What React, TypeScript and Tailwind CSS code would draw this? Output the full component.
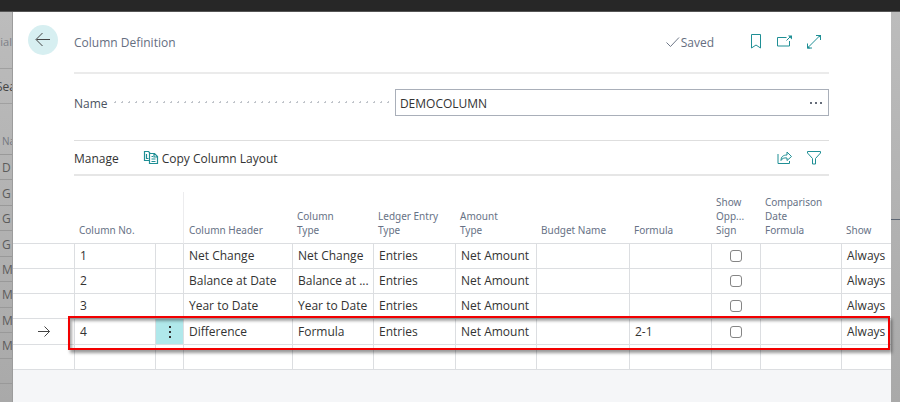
import type { ReactNode } from "react";

type Row = {
  no: string;
  header: string;
  type: string;
  entry: string;
  amount: string;
  formula: string;
  show: string;
  selected?: boolean;
};

const rows: Row[] = [
  { no: "1", header: "Net Change", type: "Net Change", entry: "Entries", amount: "Net Amount", formula: "", show: "Always" },
  { no: "2", header: "Balance at Date", type: "Balance at ...", entry: "Entries", amount: "Net Amount", formula: "", show: "Always" },
  { no: "3", header: "Year to Date", type: "Year to Date", entry: "Entries", amount: "Net Amount", formula: "", show: "Always" },
  { no: "4", header: "Difference", type: "Formula", entry: "Entries", amount: "Net Amount", formula: "2-1", show: "Always", selected: true },
];

const backgroundRows = ["D", "G", "G", "G", "M", "M", "M", "M", ""];

function Icon({ children, className = "text-[#1f8f95]" }: { children: ReactNode; className?: string }) {
  return (
    <svg width="16" height="16" viewBox="0 0 16 16" fill="none" stroke="currentColor" className={className} aria-hidden="true">
      {children}
    </svg>
  );
}

function IconButton({ label, children }: { label: string; children: ReactNode }) {
  return (
    <button type="button" aria-label={label} className="block">
      <Icon>{children}</Icon>
    </button>
  );
}

function Backdrop() {
  return (
    <div className="w-[13px] shrink-0 overflow-hidden border-r border-[#9c9c9c] bg-linear-to-b from-[#bcbcbc] to-[#a9a9a9] text-xs text-[#5c5c5c]">
      <div className="flex h-[57px] items-center justify-end border-b border-[#a0a0a0] pt-1 text-[11px] text-[#7c8088]">ial</div>
      <div className="flex h-[35px] items-center justify-center border-b border-[#a0a0a0] pt-[2px] text-[#444]">
        <span>Sea</span>
      </div>
      <div className="flex h-[51px] items-end border-b border-[#999] pb-[6px] pl-[2px] text-[10px] text-[#747880]">Na</div>
      <div className="flex h-[229px] flex-col">
        {backgroundRows.map((text, i) => (
          <div key={i} className="flex flex-1 items-center border-b border-[#999] pt-[2px] pl-[2px]">
            {text}
          </div>
        ))}
      </div>
    </div>
  );
}

function Th({ children, className = "" }: { children?: ReactNode; className?: string }) {
  return (
    <th scope="col" className={`border-b border-b-[#dcdee1] pb-[6px] pl-[5px] text-left align-bottom font-normal ${className}`}>
      {children}
    </th>
  );
}

function Td({ children, className = "pl-[5px]" }: { children?: ReactNode; className?: string }) {
  return <td className={`whitespace-nowrap border-b border-l border-[#dcdee1] ${className}`}>{children}</td>;
}

function ColumnTable() {
  return (
    <table className="w-full table-fixed border-separate border-spacing-0 text-xs leading-5 text-[#333]">
      <colgroup>
        <col className="w-[61px]" />
        <col className="w-[81px]" />
        <col className="w-[28px]" />
        <col className="w-[109px]" />
        <col className="w-[81px]" />
        <col className="w-[82px]" />
        <col className="w-[81px]" />
        <col className="w-[93px]" />
        <col className="w-[82px]" />
        <col className="w-[49px]" />
        <col className="w-[81px]" />
        <col />
      </colgroup>
      <thead className="font-['Noto_Sans',sans-serif] text-[10px] leading-[14px] text-[#677286]">
        <tr className="h-[52px]">
          <Th />
          <Th>Column No.</Th>
          <Th />
          <Th className="border-l border-l-[#ececee]">Column Header</Th>
          <Th>Column<br />Type</Th>
          <Th>Ledger Entry<br />Type</Th>
          <Th>Amount<br />Type</Th>
          <Th>Budget Name</Th>
          <Th>Formula</Th>
          <Th>Show<br />Opp...<br />Sign</Th>
          <Th>Comparison<br />Date<br />Formula</Th>
          <Th>Show</Th>
        </tr>
      </thead>
      <tbody>
        {rows.map((row) => (
          <tr key={row.no} className={row.selected ? "relative h-[26px]" : "h-[25px]"}>
            <td className="border-b border-[#dcdee1]">
              {row.selected && (
                <>
                  <Icon className="mx-auto text-[#444]">
                    <path d="M2 7.500h11.500M8.500 2.500l5 5-5 5" />
                  </Icon>
                  <span className="pointer-events-none absolute -top-[3px] right-px -bottom-[5px] left-[55px] border-2 border-[#f20000] shadow-[2px_3px_3px_rgba(0,0,0,0.4),inset_2px_3px_3px_rgba(0,0,0,0.35)]" />
                </>
              )}
            </td>
            <Td>{row.no}</Td>
            <Td className={row.selected ? "bg-[#b0e8eb]" : ""}>
              {row.selected && (
                <button type="button" aria-label="Row actions" className="flex w-full justify-center">
                  <svg width="4" height="14" viewBox="0 0 4 14" fill="#333" aria-hidden="true">
                    <rect x="1" y="1" width="2" height="2" />
                    <rect x="1" y="6" width="2" height="2" />
                    <rect x="1" y="11" width="2" height="2" />
                  </svg>
                </button>
              )}
            </Td>
            <Td>{row.header}</Td>
            <Td>{row.type}</Td>
            <Td>{row.entry}</Td>
            <Td>{row.amount}</Td>
            <Td />
            <Td>{row.formula}</Td>
            <Td className="">
              <input
                type="checkbox"
                aria-label={`Show opposite sign, column ${row.no}`}
                className="mx-auto block size-3 appearance-none rounded-[3px] border border-[#858585] bg-white"
              />
            </Td>
            <Td />
            <Td>{row.show}</Td>
          </tr>
        ))}
        <tr className="h-[25px]">
          <td className="border-b border-[#dcdee1]" />
          {Array.from({ length: 11 }, (_, i) => (
            <Td key={i} />
          ))}
        </tr>
      </tbody>
    </table>
  );
}

export default function App() {
  return (
    <div className="flex h-screen flex-col overflow-hidden bg-[#adadad] font-['Open_Sans','Noto_Sans',sans-serif]">
      <div className="h-3 shrink-0 border-b border-[#555] bg-[#272727]" />
      <div className="flex min-h-0 flex-1">
        <Backdrop />
        <main className="flex min-w-0 flex-1 flex-col bg-[#f5f6f8]">
          <div className="bg-white">
            <div className="flex pr-[62px] pl-[15px]">
              <button type="button" aria-label="Back" className="mt-[13px] mr-4 flex size-[30px] shrink-0 items-center justify-center rounded-full bg-[#d7eff1] text-[#444]">
                <svg width="16" height="16" viewBox="0 0 16 16" fill="none" stroke="currentColor" aria-hidden="true">
                  <path d="M15 7.500H1.500M7.500 1l-6.500 6.500 6.500 6.500" />
                </svg>
              </button>
              <header className="flex h-[62px] flex-1 items-center border-b-2 border-[#ebebeb] text-xs text-[#656e7f]">
                <h1 className="flex-1 pt-[2px]">Column Definition</h1>
                <span className="mr-[34px] flex items-center pt-[2px]">
                  <Icon className="text-[#6f7888]">
                    <path d="M1.500 7.500l4 4 8.500-9" />
                  </Icon>
                  Saved
                </span>
                <div className="flex gap-[13px] pr-[7px]">
                  <IconButton label="Bookmark">
                    <path d="M3.500 .5h9v13.500l-4.500-3-4.500 3z" />
                  </IconButton>
                  <IconButton label="Open in new window">
                    <path d="M9.500 3.500H.5v8.500h12V7M9.500 6.500l3.500-3.500" />
                    <path d="M11 1.500h4v4z" fill="currentColor" stroke="none" />
                  </IconButton>
                  <IconButton label="Expand">
                    <path d="M2 13.500L14 1.500M10 1.500h4.500v4.500M1.500 9.500v4.500h4.500" />
                    <path d="M11.500 1h3.500v3.500zM1 11v3.500h3.500z" fill="currentColor" stroke="none" />
                  </IconButton>
                </div>
              </header>
            </div>
            <div className="mr-[62px] ml-[61px]">
              <div className="flex items-center pt-[15px] pb-6">
                <label htmlFor="layout-name" className="mr-1 pt-[2px] text-xs text-[#4b535f]">Name</label>
                <span className="h-[7px] flex-1 bg-[radial-gradient(circle,#c0c4ca_1px,transparent_1px)] bg-[length:7px_7px]" />
                <div className="ml-1 flex h-[27px] w-[57.500%] items-center border border-[#a9afb9] bg-white pr-[5px]">
                  <input id="layout-name" defaultValue="DEMOCOLUMN" className="min-w-0 flex-1 pt-[2px] pl-1 text-xs text-[#333] outline-none" />
                  <button type="button" aria-label="More">
                    <svg width="14" height="4" viewBox="0 0 14 4" fill="#666d7a" aria-hidden="true">
                      <rect x="1" y="1" width="2" height="2" />
                      <rect x="6" y="1" width="2" height="2" />
                      <rect x="11" y="1" width="2" height="2" />
                    </svg>
                  </button>
                </div>
              </div>
              <div className="flex h-9 items-center border-t border-b-2 border-t-[#dedede] border-b-[#e6e6e6] text-xs text-[#333]">
                <button type="button" className="mr-6 pt-[2px]">Manage</button>
                <button type="button" className="flex flex-1 items-center gap-[3px]">
                  <Icon>
                    <path d="M6 10.500H1.500V1.500h4l1.500 1.500M3.500 4v4.500h2" strokeWidth="1.200" />
                    <path d="M6.500 3.500h5l3 3v7h-8zM11 3.500v3.500h3.500M8.500 6.500h1.500M8.500 9h4M8.500 11.500h4" strokeWidth="1.200" />
                  </Icon>
                  <span className="pt-[2px]">Copy Column Layout</span>
                </button>
                <div className="flex gap-[13px] pr-[7px]">
                  <IconButton label="Share">
                    <path d="M1 4v9.500h11.500V11M4 10.500c0-4 2.500-5.500 6-5.500V2l4.500 4.500L10 10.500V8c-3-.5-5 .5-6 2.500z" />
                  </IconButton>
                  <IconButton label="Filter">
                    <path d="M1.500 1.500h13v1.500L9.500 8.500v5.500h-3v-5.500L1.500 3z" />
                  </IconButton>
                </div>
              </div>
            </div>
            <div className="pt-4">
              <ColumnTable />
            </div>
          </div>
        </main>
        <div className="w-[9px] shrink-0 bg-linear-to-b from-[#bcbcbc] to-[#a9a9a9] pt-[207px]">
          <div className="h-px bg-[#5d6673]" />
        </div>
      </div>
    </div>
  );
}
